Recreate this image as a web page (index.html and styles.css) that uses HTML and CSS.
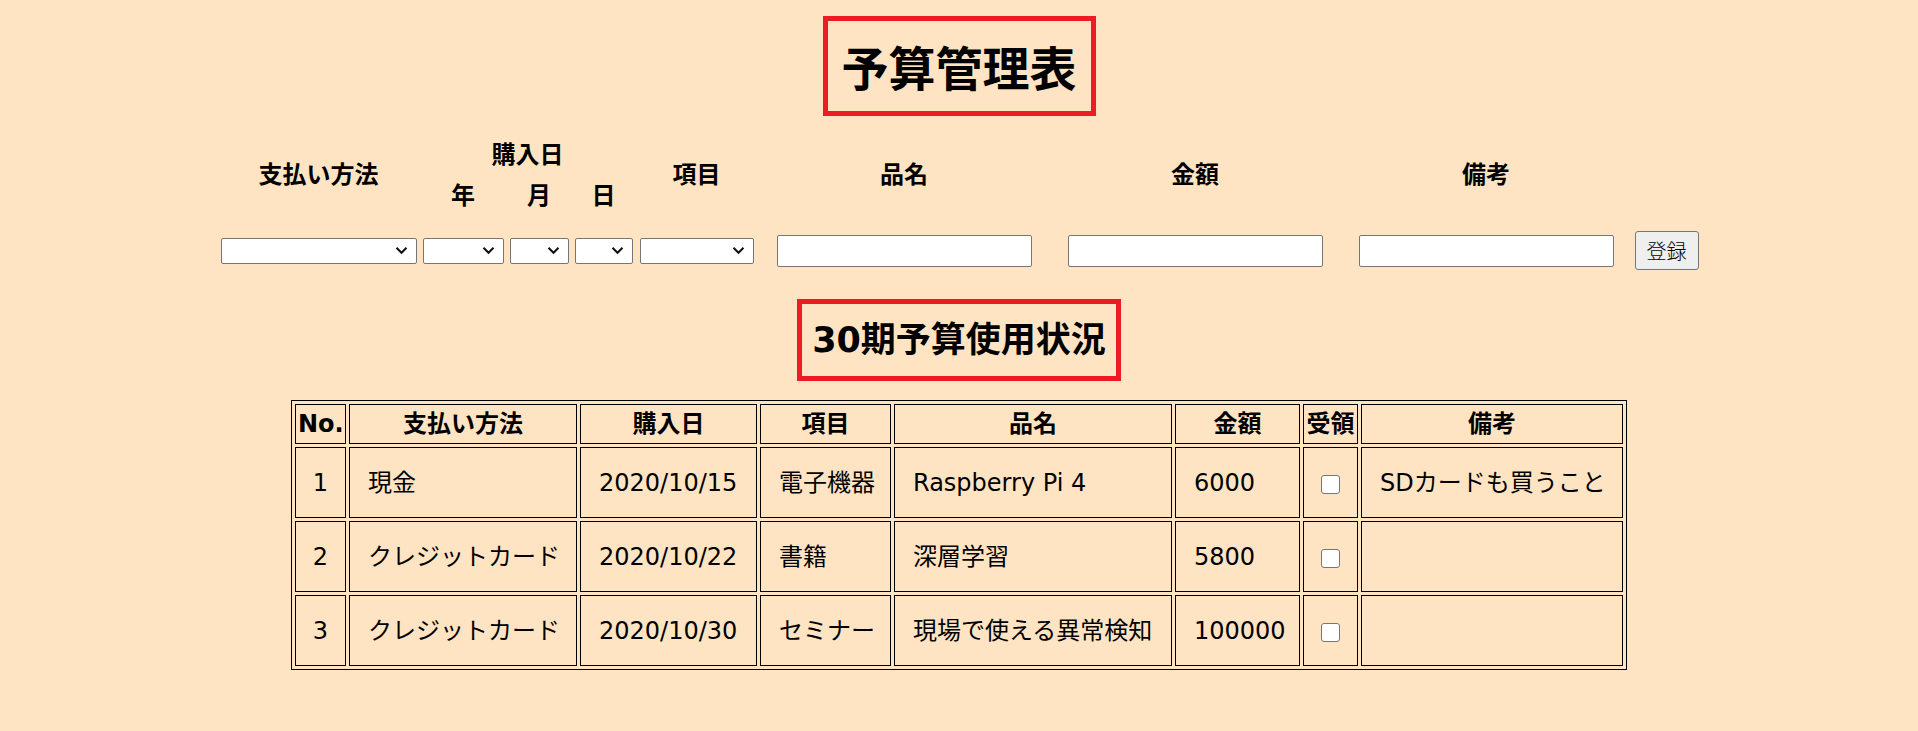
FILE: index.html
```html
<!DOCTYPE html>
<html lang="ja">
<head>
<meta charset="utf-8">
<title>予算管理表</title>
<link rel="stylesheet" href="styles.css">
</head>
<body>
<main class="page">
  <h1 class="title">予算管理表</h1>

  <form class="entry">
    <div class="lbl c-pay r-span">支払い方法</div>
    <div class="lbl c-date">購入日</div>
    <div class="lbl c-item r-span">項目</div>
    <div class="lbl c-name r-span">品名</div>
    <div class="lbl c-amount r-span">金額</div>
    <div class="lbl c-note r-span">備考</div>
    <div class="lbl c-year">年</div>
    <div class="lbl c-month">月</div>
    <div class="lbl c-day">日</div>

    <div class="cell"><select class="sel sel-pay"><option></option></select></div>
    <div class="cell"><select class="sel sel-year"><option></option></select></div>
    <div class="cell"><select class="sel sel-month"><option></option></select></div>
    <div class="cell"><select class="sel sel-day"><option></option></select></div>
    <div class="cell"><select class="sel sel-item"><option></option></select></div>
    <div class="cell"><input class="txt" type="text"></div>
    <div class="cell"><input class="txt" type="text"></div>
    <div class="cell"><input class="txt" type="text"></div>
    <div class="cell"><button class="btn" type="button">登録</button></div>
  </form>

  <h2 class="subtitle">30期予算使用状況</h2>

  <table class="budget">
    <thead>
      <tr>
        <th class="w-no">No.</th>
        <th class="w-pay">支払い方法</th>
        <th class="w-date">購入日</th>
        <th class="w-item">項目</th>
        <th class="w-name">品名</th>
        <th class="w-amount">金額</th>
        <th class="w-recv">受領</th>
        <th class="w-note">備考</th>
      </tr>
    </thead>
    <tbody>
      <tr>
        <td class="num">1</td>
        <td>現金</td>
        <td>2020/10/15</td>
        <td>電子機器</td>
        <td>Raspberry Pi 4</td>
        <td>6000</td>
        <td class="chk"><input type="checkbox"></td>
        <td>SDカードも買うこと</td>
      </tr>
      <tr>
        <td class="num">2</td>
        <td>クレジットカード</td>
        <td>2020/10/22</td>
        <td>書籍</td>
        <td>深層学習</td>
        <td>5800</td>
        <td class="chk"><input type="checkbox"></td>
        <td></td>
      </tr>
      <tr>
        <td class="num">3</td>
        <td>クレジットカード</td>
        <td>2020/10/30</td>
        <td>セミナー</td>
        <td>現場で使える異常検知</td>
        <td>100000</td>
        <td class="chk"><input type="checkbox"></td>
        <td></td>
      </tr>
    </tbody>
  </table>
</main>
</body>
</html>
```

FILE: styles.css
```css
html, body {
  margin: 0;
  padding: 0;
}

body {
  background: #ffe4c4;
  color: #000;
  font-family: "DejaVu Sans", "Noto Sans CJK JP", sans-serif;
  font-size: 24px;
}

.page {
  display: flex;
  flex-direction: column;
  align-items: center;
}

.title {
  margin: 16px 0 0;
  border: 5px solid #ed1c24;
  padding: 0 14px;
  font-family: "Noto Sans CJK JP", sans-serif;
  font-size: 47px;
  font-weight: 700;
  line-height: 90px;
}

/* entry form */
.entry {
  margin-top: 19px;
  display: grid;
  grid-template-columns: 202px 87px 65px 64px 122px 293px 289px 293px 68px;
  grid-template-rows: 39px 39px auto;
}

.lbl {
  display: flex;
  align-items: center;
  justify-content: center;
  font-family: "Noto Sans CJK JP", sans-serif;
  font-size: 24px;
  font-weight: 700;
}

.r-span { grid-row: 1 / 3; padding-bottom: 4px; }
.c-pay { grid-column: 1; }
.c-date { grid-column: 2 / 5; grid-row: 1; padding-bottom: 4px; }
.c-year { grid-column: 2; grid-row: 2; }
.c-month { grid-column: 3; grid-row: 2; }
.c-day { grid-column: 4; grid-row: 2; }
.c-item { grid-column: 5; }
.c-name { grid-column: 6; }
.c-amount { grid-column: 7; }
.c-note { grid-column: 8; }

.cell {
  grid-row: 3;
  padding-top: 18px;
  height: 39px;
  display: flex;
  align-items: center;
  justify-content: center;
}

.sel {
  appearance: none;
  -webkit-appearance: none;
  box-sizing: border-box;
  height: 26px;
  margin: 0;
  border: 1px solid #767676;
  border-radius: 2px;
  background-color: #fff;
  background-image: url("data:image/svg+xml,%3Csvg xmlns='http://www.w3.org/2000/svg' width='13' height='9' viewBox='0 0 13 9'%3E%3Cpolyline points='1.5,1.8 6.5,6.8 11.5,1.8' fill='none' stroke='%23111' stroke-width='2'/%3E%3C/svg%3E");
  background-repeat: no-repeat;
  background-position: right 8px center;
  font-size: 16px;
}

.sel-pay { width: 196px; }
.sel-year { width: 81px; }
.sel-month { width: 59px; }
.sel-day { width: 58px; }
.sel-item { width: 114px; }

.txt {
  box-sizing: border-box;
  width: 255px;
  height: 32px;
  margin: 0;
  border: 1px solid #767676;
  border-radius: 2px;
  background: #fff;
  font-size: 20px;
}

.btn {
  box-sizing: border-box;
  width: 64px;
  height: 39px;
  margin: 0;
  padding: 0;
  border: 1px solid #767676;
  border-radius: 3px;
  background: #efefef;
  color: #000;
  font-family: "Noto Sans CJK JP", sans-serif;
  font-size: 20px;
  font-weight: 300;
}

.subtitle {
  margin: 29px 0 0;
  border: 5px solid #ed1c24;
  padding: 0 10px;
  font-size: 35px;
  font-weight: 700;
  line-height: 72px;
}

/* table */
.budget {
  margin-top: 19px;
  width: 1336px;
  table-layout: fixed;
  border: 1px solid #000;
  border-spacing: 3px;
  font-size: 24px;
}

.budget th,
.budget td {
  box-sizing: border-box;
  border: 1px solid #000;
  line-height: 36px;
  white-space: nowrap;
}

.budget th {
  padding: 1px 2px;
  font-family: "DejaVu Sans", "Noto Sans CJK JP", sans-serif;
  font-weight: 700;
  text-align: center;
}

.budget td {
  padding: 17px 18px 16px;
  text-align: left;
}

.budget td.num,
.budget td.chk {
  text-align: center;
  padding-left: 0;
  padding-right: 0;
}

.w-no { width: 51px; }
.w-pay { width: 228px; }
.w-date { width: 177px; }
.w-item { width: 131px; }
.w-name { width: 278px; }
.w-amount { width: 125px; }
.w-recv { width: 55px; }
.w-note { width: 262px; }

.chk input {
  appearance: none;
  -webkit-appearance: none;
  width: 19px;
  height: 19px;
  margin: 0;
  border: 1px solid #767676;
  border-radius: 3px;
  background: #fff;
  vertical-align: middle;
}
```
